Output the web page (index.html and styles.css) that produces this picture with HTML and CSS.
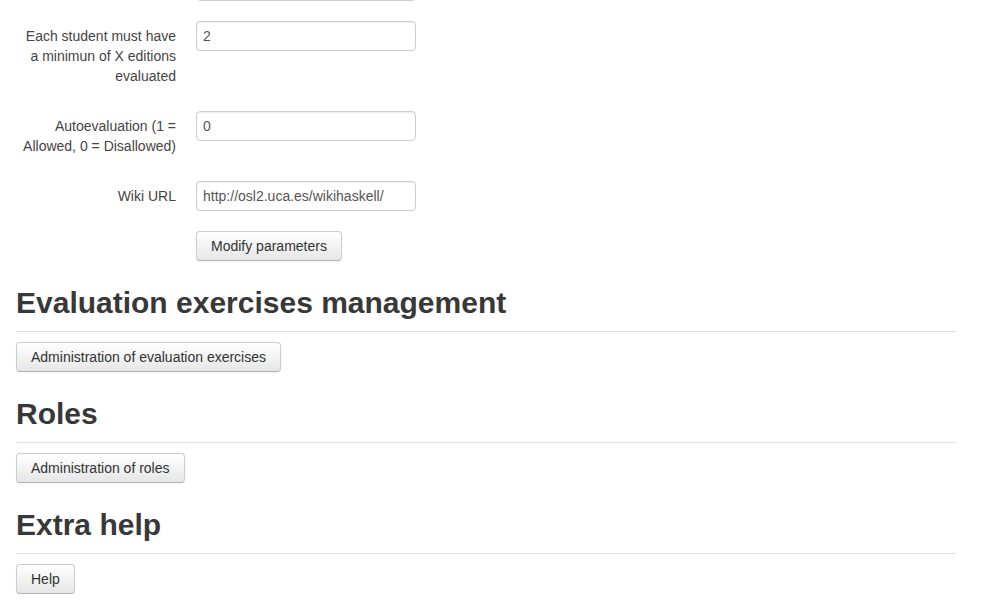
FILE: index.html
```html
<!DOCTYPE html>
<html>
<head>
<meta charset="utf-8">
<link rel="stylesheet" href="styles.css">
</head>
<body>
<div class="container">
  <form class="form-horizontal">
    <div class="control-group">
      <label class="control-label">&nbsp;</label>
      <div class="controls"><input class="input" type="text" value=""></div>
    </div>
    <div class="control-group">
      <label class="control-label">Each student must have a minimun of X editions evaluated</label>
      <div class="controls"><input class="input" type="text" value="2"></div>
    </div>
    <div class="control-group">
      <label class="control-label">Autoevaluation (1 = Allowed, 0 = Disallowed)</label>
      <div class="controls"><input class="input" type="text" value="0"></div>
    </div>
    <div class="control-group">
      <label class="control-label">Wiki URL</label>
      <div class="controls"><input class="input" type="text" value="http://osl2.uca.es/wikihaskell/"></div>
    </div>
    <div class="form-actions">
      <button type="button" class="btn">Modify parameters</button>
    </div>
  </form>

  <section class="section">
    <h2 class="section-title">Evaluation exercises management</h2>
    <button type="button" class="btn">Administration of evaluation exercises</button>
  </section>

  <section class="section">
    <h2 class="section-title">Roles</h2>
    <button type="button" class="btn">Administration of roles</button>
  </section>

  <section class="section">
    <h2 class="section-title">Extra help</h2>
    <button type="button" class="btn">Help</button>
  </section>
</div>
</body>
</html>
```

FILE: styles.css
```css
html, body {
  margin: 0;
  padding: 0;
  background: #fff;
}

body {
  font-family: "Liberation Sans", Arial, Helvetica, sans-serif;
  font-size: 14px;
  line-height: 20px;
  color: #333;
  overflow: hidden;
}

.container {
  width: 940px;
  margin-left: 16px;
  margin-top: -29px;
}

.form-horizontal {
  margin: 0;
}

.control-group {
  display: flex;
  align-items: flex-start;
  margin-bottom: 20px;
}

.control-label {
  display: block;
  width: 160px;
  flex: none;
  padding-top: 5px;
  margin-bottom: 5px;
  text-align: right;
  color: #444;
}

.controls {
  margin-left: 20px;
}

.input {
  display: block;
  box-sizing: border-box;
  width: 220px;
  height: 30px;
  margin: 0;
  padding: 4px 6px;
  font-family: "Liberation Sans", Arial, Helvetica, sans-serif;
  font-size: 14px;
  line-height: 20px;
  color: #555;
  background: #fff;
  border: 1px solid #ccc;
  border-radius: 4px;
  box-shadow: inset 0 1px 1px rgba(0, 0, 0, 0.075);
  outline: none;
}

.form-actions {
  padding-left: 180px;
}

.btn {
  display: inline-block;
  box-sizing: border-box;
  height: 30px;
  margin: 0;
  padding: 4px 14px;
  font-family: "Liberation Sans", Arial, Helvetica, sans-serif;
  font-size: 14px;
  line-height: 20px;
  color: #333;
  text-align: center;
  background-color: #f5f5f5;
  background-image: linear-gradient(to bottom, #ffffff, #e6e6e6);
  border: 1px solid #cccccc;
  border-bottom-color: #b3b3b3;
  border-radius: 4px;
  box-shadow: inset 0 1px 0 rgba(255, 255, 255, 0.2), 0 1px 2px rgba(0, 0, 0, 0.05);
  cursor: pointer;
}

.section {
  display: flex;
  flex-direction: column;
  align-items: flex-start;
}

.section-title {
  align-self: stretch;
  margin: 25px 0 10px 0;
  padding-bottom: 12px;
  font-size: 30px;
  line-height: 33px;
  font-weight: bold;
  color: #383838;
  border-bottom: 1px solid #e0e0e0;
}
```
